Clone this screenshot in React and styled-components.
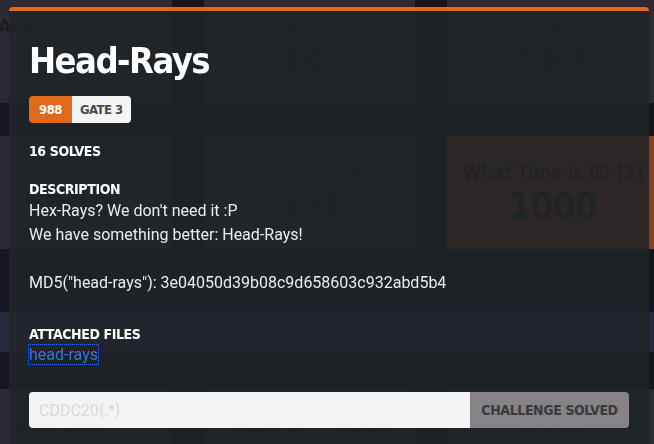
import React from 'react'
import styled, { createGlobalStyle } from 'styled-components'

const GlobalStyle = createGlobalStyle`
    html, body {
        margin: 0;
        padding: 0;
        height: 100%;
        overflow: hidden;
        background: #15141f;
    }
    body {
        font-family: Roboto, 'Liberation Sans', sans-serif;
    }
`

const condensed = `'DejaVu Sans Condensed', 'DejaVu Sans', sans-serif`

const Board = styled.main`
    margin: -10px 0 0 -39px;
    width: 760px;
    display: flex;
    flex-direction: column;
`
const CardRow = styled.div`
    display: grid;
    grid-template-columns: repeat(3, 211px);
    column-gap: 32px;
    margin-bottom: ${(p) => p.$gap || 0}px;
`
const Card = styled.div`
    height: 113px;
    background: ${(p) => (p.$solved ? '#8a3e1c' : '#2c2a35')};
    display: flex;
    flex-direction: column;
    align-items: center;
    padding-top: 24px;
    box-sizing: border-box;
    color: ${(p) => (p.$solved ? '#2a1a14' : '#1c1b24')};
    font-family: ${condensed};
    font-weight: bold;
`
const CardTitle = styled.div`
    font-size: 19px;
    line-height: 24px;
    letter-spacing: -0.5px;
    white-space: nowrap;
`
const CardPoints = styled.div`
    font-size: 37px;
    line-height: 46px;
    letter-spacing: -1px;
`
const Category = styled.div`
    display: flex;
    flex-direction: column;
    margin-bottom: 37px;
`
const CategorySpacer = styled.div`
    height: 63px;
`
const CategoryBand = styled.div`
    height: 40px;
    background: #252a3a;
`

const Overlay = styled.div`
    position: fixed;
    inset: 0;
    padding: 7px 0 0 9px;
`
const Dialog = styled.section`
    width: 640px;
    min-height: 460px;
    box-sizing: border-box;
    border-top: 4px solid #e0691e;
    border-radius: 4px 4px 0 0;
    background: rgba(31, 36, 40, 0.88);
    padding: 25px 20px 0;
    color: #ececec;
`
const Title = styled.h1`
    margin: 0;
    font-family: ${condensed};
    font-weight: bold;
    font-size: 36px;
    line-height: 50px;
    letter-spacing: -1.5px;
    color: #ffffff;
`
const BadgeGroup = styled.div`
    display: inline-flex;
    margin-top: 10px;
    border-radius: 4px;
    overflow: hidden;
    font-family: ${condensed};
    font-weight: bold;
    font-size: 13px;
    letter-spacing: -0.5px;
`
const Badge = styled.span`
    height: 27px;
    display: flex;
    align-items: center;
    padding: 0 ${(p) => (p.$accent ? 10 : 8)}px;
    background: ${(p) => (p.$accent ? '#e0691e' : '#f4f4f4')};
    color: ${(p) => (p.$accent ? '#ffffff' : '#4a4a4e')};
`
const Label = styled.h3`
    margin: ${(p) => p.$top}px 0 0;
    font-family: ${condensed};
    font-weight: bold;
    font-size: 14px;
    line-height: 20px;
    letter-spacing: -0.4px;
    color: #ffffff;
`
const Text = styled.p`
    margin: 0;
    font-size: 16px;
    line-height: 24px;
    min-height: 24px;
`
const FileLink = styled.a`
    display: inline-block;
    margin-top: 1px;
    font-size: 16px;
    line-height: 19px;
    color: #3e72d0;
    text-decoration: none;
    outline: 1px dotted #2f6fe8;
`
const SubmitRow = styled.form`
    display: flex;
    margin-top: 28px;
    height: 36px;
`
const FlagInput = styled.input`
    flex: 1;
    border: none;
    border-radius: 4px 0 0 4px;
    background: #f4f4f4;
    padding: 0 10px;
    font-family: Roboto, sans-serif;
    font-size: 16px;
    color: #333;
    &::placeholder {
        color: #d9d9d9;
    }
`
const SolvedButton = styled.button`
    width: 159px;
    padding: 0;
    border: none;
    border-radius: 0 4px 4px 0;
    background: #858386;
    color: #3a393e;
    font-family: ${condensed};
    font-weight: bold;
    font-size: 14px;
    letter-spacing: -0.4px;
    white-space: nowrap;
`

const rows = [
    [
        { name: 'BACK TO SCHOOL', value: '' },
        { name: 'Head-Rays', value: 988 },
        { name: 'Wanna PIG?', value: 989 },
    ],
    [
        { name: '3-DCS', value: 1000 },
        { name: 'I Love Bach', value: 991 },
        { name: 'What Time Is It? [2]', value: 1000, solved: true },
    ],
]

const lastRow = [
    { name: 'Emergency', value: 1000 },
    { name: 'Unknown Protocol', value: 1000 },
    { name: 'Is It Me', value: 1000 },
]

export default function App() {
    const renderCard = (c) => (
        <Card key={c.name} $solved={c.solved}>
            <CardTitle>{c.name}</CardTitle>
            <CardPoints>{c.value}</CardPoints>
        </Card>
    )

    return (
        <>
            <GlobalStyle />
            <Board>
                <CardRow $gap={33}>{rows[0].map(renderCard)}</CardRow>
                <CardRow>{rows[1].map(renderCard)}</CardRow>
                <Category>
                    <CategorySpacer />
                    <CategoryBand />
                </Category>
                <CardRow>{lastRow.map(renderCard)}</CardRow>
            </Board>
            <Overlay>
                <Dialog>
                    <Title>Head-Rays</Title>
                    <BadgeGroup>
                        <Badge $accent>988</Badge>
                        <Badge>GATE 3</Badge>
                    </BadgeGroup>
                    <Label $top={18}>16 SOLVES</Label>
                    <Label $top={18}>DESCRIPTION</Label>
                    <Text>Hex-Rays? We don't need it :P</Text>
                    <Text>We have something better: Head-Rays!</Text>
                    <Text />
                    <Text>MD5("head-rays"): 3e04050d39b08c9d658603c932abd5b4</Text>
                    <Label $top={29}>ATTACHED FILES</Label>
                    <FileLink href="#">head-rays</FileLink>
                    <SubmitRow onSubmit={(e) => e.preventDefault()}>
                        <FlagInput placeholder="CDDC20{.*}" />
                        <SolvedButton type="button">CHALLENGE SOLVED</SolvedButton>
                    </SubmitRow>
                </Dialog>
            </Overlay>
        </>
    )
}
